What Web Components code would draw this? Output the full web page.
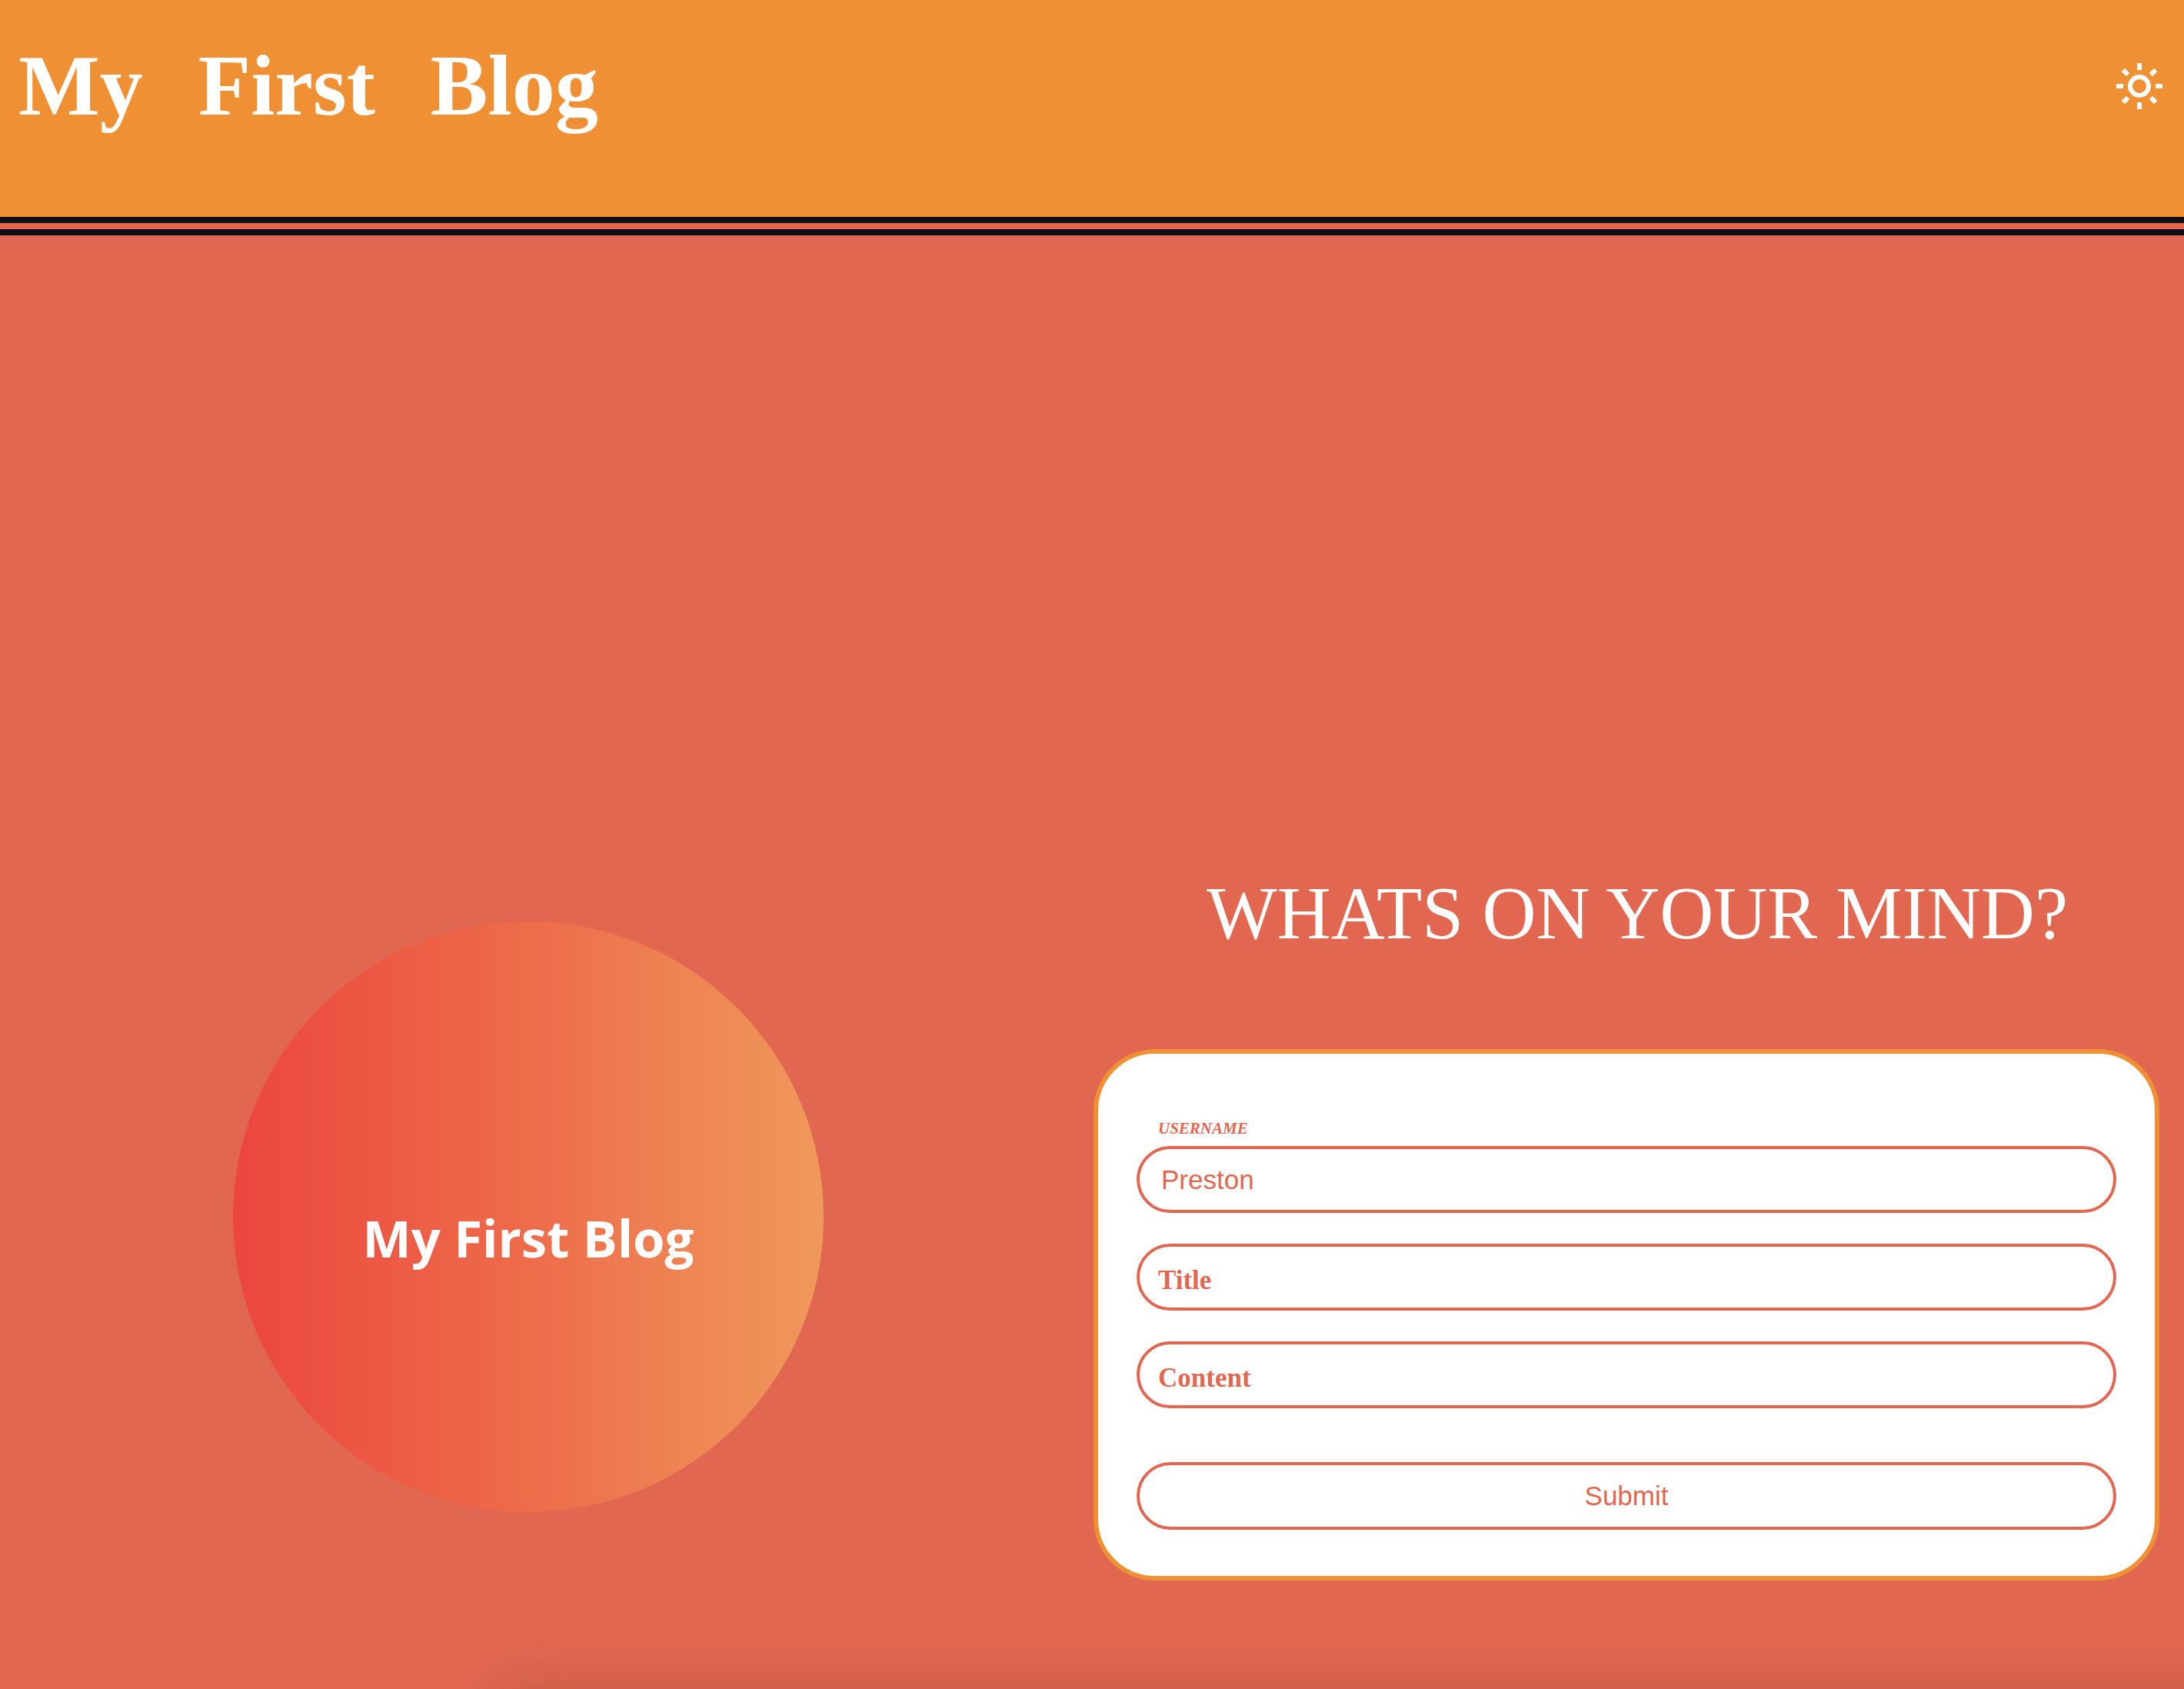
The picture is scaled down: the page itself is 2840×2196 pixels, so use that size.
<!DOCTYPE html>
<html lang="en">
<head>
<meta charset="utf-8">
<meta name="viewport" content="width=device-width, initial-scale=1">
<title>My First Blog</title>
<style>
  :root {
    --coral: #e16751;
    --orange: #ef9035;
    --ink: #0f0e17;
    --paper: #fff;
    --serif: "Liberation Serif", "Times New Roman", serif;
    --sans: "Liberation Sans", Arial, sans-serif;
  }
  body { margin: 0; background: var(--coral); font-family: var(--serif); }
</style>
</head>
<body>
<blog-app>
  <blog-header slot="header">
    <span>My</span> <span>First</span> <span>Blog</span>
    <theme-toggle slot="action"></theme-toggle>
  </blog-header>
  <blog-logo slot="aside">My First Blog</blog-logo>
  <post-form slot="main" heading="WHATS ON YOUR MIND?">
    <form-field label="USERNAME" name="username" value="Preston"></form-field>
    <form-field label="Title" name="title"></form-field>
    <form-field label="Content" name="content"></form-field>
    <submit-button slot="submit">Submit</submit-button>
  </post-form>
</blog-app>

<script>
  const define = (name, render, ready) => {
    customElements.define(name, class extends HTMLElement {
      constructor() {
        super();
        this.attachShadow({ mode: "open" });
      }
      connectedCallback() {
        this.shadowRoot.innerHTML = render(this);
        if (ready) ready(this);
      }
    });
  };

  define("blog-app", () => `
    <style>
      :host {
        display: flex; flex-direction: column; min-height: 100vh;
        position: relative; overflow: clip; background: var(--coral);
      }
      main {
        flex: 1; display: flex; align-items: flex-end; gap: 48px;
        box-sizing: border-box; padding: 48px 32px 141px 0;
      }
      .aside { flex: 1; display: flex; justify-content: center; padding-bottom: 89px; }
      .main { flex: 0 1 calc(50vw - 34px); }
      /* soft shadow rising from the panel below the fold */
      .fold {
        position: absolute; top: calc(100% + 10px); left: 656px; right: -200px; height: 200px;
        border-radius: 20px; box-shadow: 0 0 80px rgba(0, 0, 0, .18);
      }
    </style>
    <slot name="header"></slot>
    <main>
      <div class="aside"><slot name="aside"></slot></div>
      <div class="main"><slot name="main"></slot></div>
    </main>
    <div class="fold"></div>`);

  define("blog-header", () => `
    <style>
      :host { display: block; }
      header {
        display: flex; justify-content: space-between; align-items: flex-start;
        padding: 47px 24px 107px;
        background: var(--orange); background-clip: padding-box;
        border-bottom: 24px double var(--ink);
      }
      h1 { margin: 0; font: bold 112px/128px var(--serif); color: var(--paper); }
      ::slotted(span:not(:first-of-type)) { margin-left: 44px; }
    </style>
    <header><h1><slot></slot></h1><slot name="action"></slot></header>`);

  define("theme-toggle", () => `
    <style>
      :host { display: flex; padding-top: 31px; }
      button { display: flex; padding: 0; border: 0; background: none; color: var(--paper); cursor: pointer; }
      svg { display: block; width: 68px; height: 68px; }
    </style>
    <button type="button" aria-label="Toggle theme">
      <svg viewBox="-34 -34 68 68" fill="none" stroke="currentColor" stroke-width="6">
        <circle r="12"/>
        <path d="M0-30v9M0 21v9M-30 0h9M21 0h9"/>
        <path d="M0-30v9M0 21v9M-30 0h9M21 0h9" transform="rotate(45)"/>
      </svg>
    </button>`);

  define("blog-logo", () => `
    <style>
      :host {
        display: flex; align-items: center; justify-content: center; box-sizing: border-box;
        width: 768px; aspect-ratio: 1; padding-top: 54px; border-radius: 50%;
        background: linear-gradient(90deg, #ec463e, #ed6c4a 50%, #f0995c);
        color: #fff; font: 700 67px/80px "Open Sans", sans-serif; white-space: nowrap;
      }
    </style>
    <slot></slot>`);

  define("post-form", host => `
    <style>
      :host { display: block; }
      h2 {
        margin: 0 0 120px; padding-left: 28px; text-align: center;
        font: 400 97px/112px var(--serif); color: var(--paper);
      }
      form {
        display: flex; flex-direction: column; gap: 40px;
        padding: 120px 50px 60px; background: var(--paper);
        border: 6px solid var(--orange); border-radius: 80px;
      }
      ::slotted(submit-button) { margin-top: 30px; }
    </style>
    <h2>${host.getAttribute("heading")}</h2>
    <form><slot></slot><slot name="submit"></slot></form>`);

  define("form-field", host => `
    <style>
      :host { display: block; position: relative; color: var(--coral); }
      input {
        display: block; box-sizing: border-box; width: 100%; margin: 0; padding: 20px 28px;
        border: 4px solid var(--coral); border-radius: 44px; outline: 0;
        background: transparent; color: inherit; font: 35px/39px var(--sans); height: 87px;
      }
      label {
        position: absolute; left: 28px; top: 28px; pointer-events: none;
        font: bold 35px/39px var(--serif);
      }
      .filled label {
        top: auto; bottom: calc(100% + 11px);
        font: italic bold 21px/24px var(--serif);
      }
    </style>
    <div class="${host.hasAttribute("value") ? "filled" : ""}">
      <label for="control">${host.getAttribute("label")}</label>
      <input id="control" type="text" name="${host.getAttribute("name")}" value="${host.getAttribute("value") || ""}">
    </div>`, host => {
      const input = host.shadowRoot.querySelector("input");
      input.addEventListener("input", () =>
        input.parentElement.classList.toggle("filled", input.value !== ""));
    });

  define("submit-button", () => `
    <style>
      :host { display: block; }
      button {
        display: block; width: 100%; margin: 0; padding: 20px 28px; cursor: pointer;
        border: 4px solid var(--coral); border-radius: 44px;
        background: transparent; color: var(--coral); font: 35px/40px var(--sans);
      }
    </style>
    <button type="submit"><slot></slot></button>`);
</script>
</body>
</html>
